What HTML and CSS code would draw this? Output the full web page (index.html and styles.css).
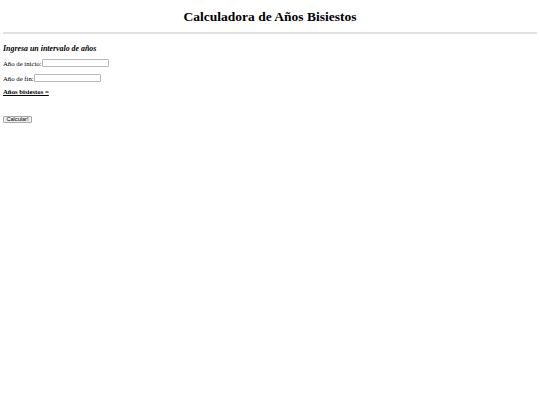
FILE: index.html
```html
<!DOCTYPE html>
<html lang="es">
<head>
    <meta charset="UTF-8">
    <meta name="viewport" content="width=device-width, initial-scale=1.0">
    <title>Calculadora de Años Bisiestos</title>
    <link rel="stylesheet" href="styles.css">
</head>
<body>
    <h1 class="titulo">Calculadora de Años Bisiestos</h1>
    <hr class="linea">

    <form class="formulario" id="formulario">
        <h3 class="subtitulo">Ingresa un intervalo de años</h3>

        <p class="campo">
            <label for="inicio">Año de inicio:</label><input type="text" id="inicio" class="caja">
        </p>
        <p class="campo">
            <label for="fin">Año de fin:</label><input type="text" id="fin" class="caja">
        </p>

        <p class="resultado"><u>Años bisiestos =</u> <span id="resultado"></span></p>

        <button type="button" class="boton" id="calcular">Calcular!</button>
    </form>
</body>
</html>
```

FILE: styles.css
```css
body {
    margin: 3px;
    font-family: "Liberation Serif", "Times New Roman", serif;
    font-size: 6.75px;
    color: #000;
    background: #fff;
}

.titulo {
    font-size: 13.5px;
    line-height: 16px;
    text-align: center;
    margin: 5.5px 0 0 0;
}

/* linea gris bajo el titulo */
.linea {
    border: 0;
    border-top: 2px solid #e2e2e2;
    margin: 7.5px 0 0 0;
    height: 0;
}

.subtitulo {
    font-size: 7.9px;
    line-height: 9px;
    font-style: italic;
    margin: 10px 0 6px 0;
}

.campo {
    display: flex;
    align-items: center;
    height: 8px;
    margin: 0 0 7px 0;
}

.caja {
    width: 67px;
    height: 8px;
    padding: 0 1px;
    font-size: 6px;
    border: 1px solid #b8b8b8;
    border-radius: 1px;
    box-sizing: border-box;
    background: #fff;
}

.resultado {
    font-weight: bold;
    line-height: 8px;
    margin: -1.5px 0 20.5px 0;
}

.boton {
    display: block;
    font-family: "Liberation Sans", Arial, sans-serif;
    font-size: 5.6px;
    width: 29px;
    height: 7px;
    padding: 0;
    line-height: 5px;
    border: 1px solid #a8a8a8;
    border-radius: 1px;
    background: #efefef;
    color: #000;
}
```
